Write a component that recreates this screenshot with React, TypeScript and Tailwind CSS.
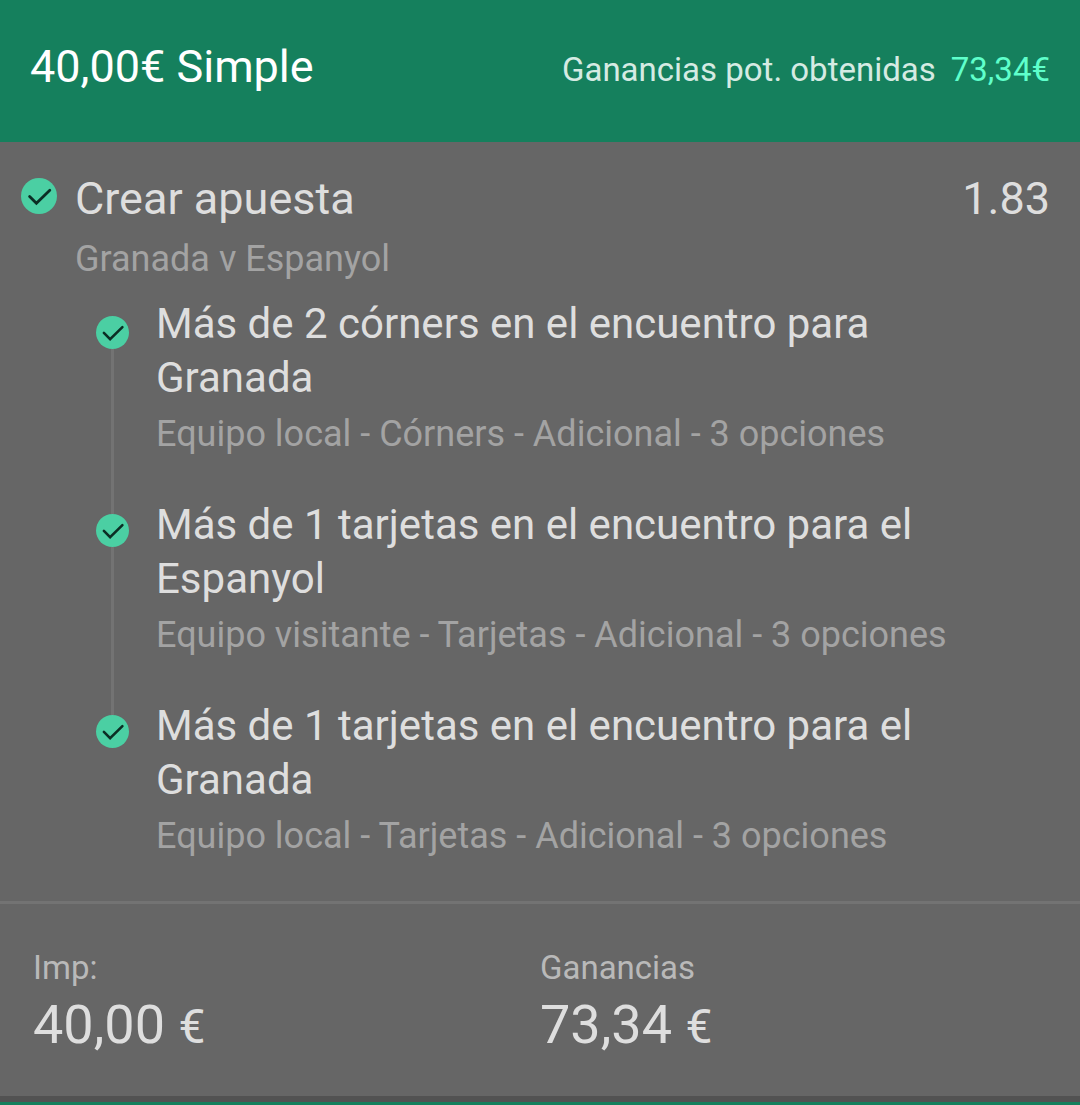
import React from "react";

const SELECTIONS = [
  {
    id: "1",
    title: "Más de 2 córners en el encuentro para Granada",
    market: "Equipo local - Córners - Adicional - 3 opciones",
  },
  {
    id: "2",
    title: "Más de 1 tarjetas en el encuentro para el Espanyol",
    market: "Equipo visitante - Tarjetas - Adicional - 3 opciones",
  },
  {
    id: "3",
    title: "Más de 1 tarjetas en el encuentro para el Granada",
    market: "Equipo local - Tarjetas - Adicional - 3 opciones",
  },
];

const CheckIcon = ({ className }: { className: string }) => (
  <svg viewBox="0 0 36 36" className={className} aria-hidden="true">
    <circle cx="18" cy="18" r="18" fill="#4bcfa3" />
    <path
      d="M8.6 18.4L15.4 25.3L28.8 12.2"
      fill="none"
      stroke="#0b2e24"
      strokeWidth="2.8"
      strokeLinecap="round"
    />
  </svg>
);

const App = () => {
  return (
    <div className="min-h-screen bg-[#666666] font-[Roboto,sans-serif] text-[#dedede]">
      <header className="flex items-center justify-between bg-[#15805d] px-[30px] pt-9 pb-11">
        <h1 className="text-[45px] leading-[62px] text-white">40,00€ Simple</h1>
        <p className="flex gap-[15px] pt-1.5 text-[33px] leading-10 text-[#d5ebe3]">
          <span>Ganancias pot. obtenidas</span>
          <span className="text-[#5fffcb]">73,34€</span>
        </p>
      </header>

      <main className="border-b-3 border-[#737373] pt-7 pb-9">
        <div className="flex items-start pl-[21px] pr-[30px]">
          <CheckIcon className="mt-2 mr-[18px] size-9 shrink-0" />
          <div className="flex-1">
            <h2 className="text-[45px] leading-[58px]">Crear apuesta</h2>
            <p className="text-[36px] leading-[62px] text-[#a3a3a3]">Granada v Espanyol</p>
          </div>
          <span className="text-[45px] leading-[58px]">1.83</span>
        </div>

        <ul className="pl-24 pr-[30px]">
          {SELECTIONS.map((selection, index) => (
            <li key={selection.id} className="flex gap-[27px]">
              <div className="flex w-[33px] shrink-0 flex-col items-center">
                <div className={index === 0 ? "h-[26px]" : "h-[23px] w-[3px] bg-[#737373]"} />
                <CheckIcon className="size-[33px] shrink-0" />
                {index < SELECTIONS.length - 1 && <div className="w-[3px] flex-1 bg-[#737373]" />}
              </div>
              <div className={index < SELECTIONS.length - 1 ? "pt-[7px] pb-7" : "pt-[7px]"}>
                <h3 className="max-w-[800px] text-[42px] leading-[54px]">{selection.title}</h3>
                <p className="text-[36px] leading-[58px] text-[#a3a3a3]">{selection.market}</p>
              </div>
            </li>
          ))}
        </ul>
      </main>

      <dl className="grid grid-cols-2 border-b-6 border-[#525252] pt-10 pb-9">
        <div className="pl-[33px]">
          <dt className="text-[33px] leading-[48px] text-[#b9b9b9]">Imp:</dt>
          <dd className="text-[54px] leading-[66px]">
            40,00 <span className="text-[48px]">€</span>
          </dd>
        </div>
        <div>
          <dt className="text-[33px] leading-[48px] text-[#b9b9b9]">Ganancias</dt>
          <dd className="text-[54px] leading-[66px]">
            73,34 <span className="text-[48px]">€</span>
          </dd>
        </div>
      </dl>
      <div className="h-[3px] bg-[#15805d]" />
    </div>
  );
};

export default App;
